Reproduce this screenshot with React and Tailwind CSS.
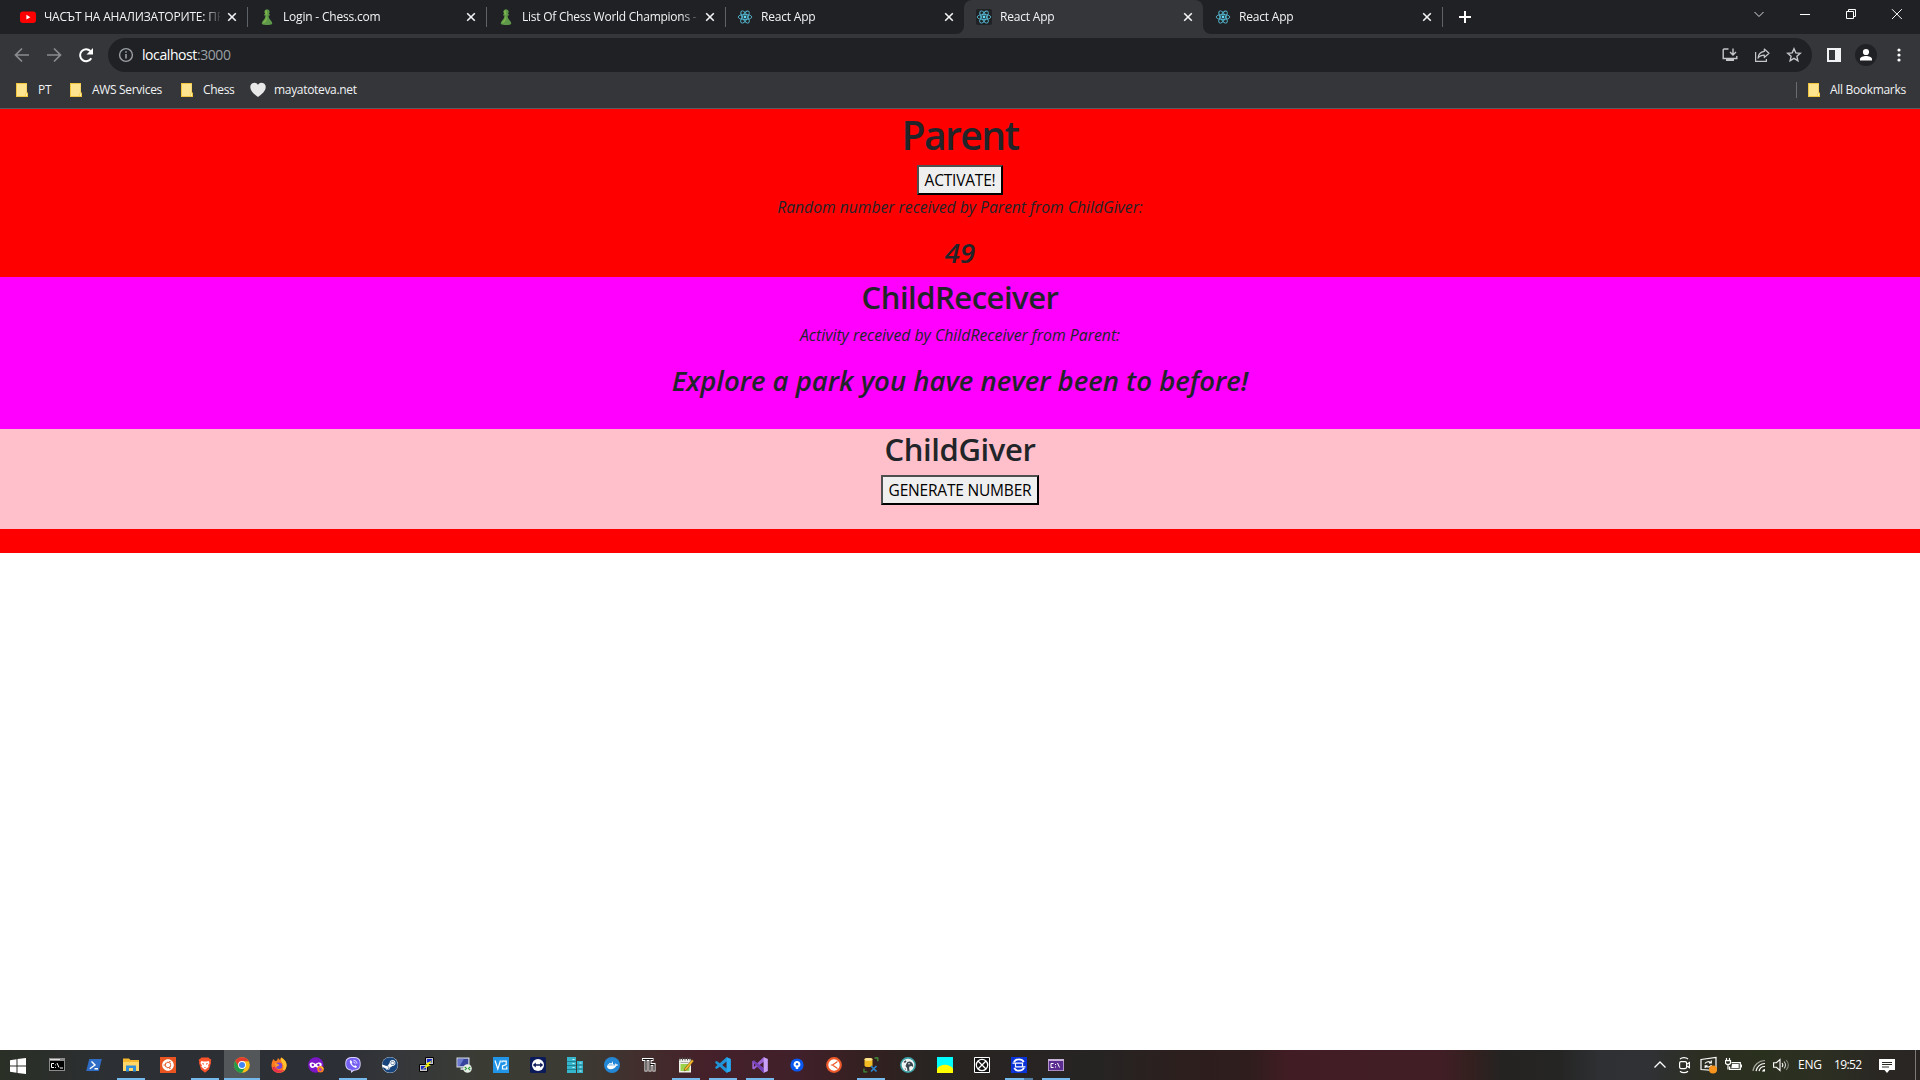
import React from "react";
import { FaUbuntu, FaSteam, FaDocker } from "react-icons/fa";

const UI = "font-['Open_Sans','Noto_Sans',sans-serif]";

/* ---------- browser icons ---------- */

function ReactLogo({ dark }) {
  return (
    <svg width="16" height="16" viewBox="0 0 16 16" fill="none">
      {dark && <rect width="16" height="16" rx="2" fill="#202124" />}
      <g stroke="#53b6cf" strokeWidth="0.9">
        <ellipse cx="8" cy="8" rx="6.8" ry="2.6" />
        <ellipse cx="8" cy="8" rx="6.8" ry="2.6" transform="rotate(60 8 8)" />
        <ellipse cx="8" cy="8" rx="6.8" ry="2.6" transform="rotate(120 8 8)" />
      </g>
      <circle cx="8" cy="8" r="1.4" fill="#61dafb" />
    </svg>
  );
}

function YouTube() {
  return (
    <svg width="16" height="16" viewBox="0 0 16 16">
      <rect y="2.5" width="16" height="11.5" rx="3" fill="#f00" />
      <path d="M6.4 5.8v4.8l4-2.4z" fill="#fff" />
    </svg>
  );
}

function Pawn() {
  return (
    <svg width="16" height="16" viewBox="0 0 16 16">
      <path
        d="M8 .3a2.6 2.6 0 0 1 1.9 4.4l1 .9v.9H9.6c.1 2.4.9 3.6 2.4 5.2.9 1 1.2 1.9 1.2 3.2-1.2.8-3 1.1-5.2 1.1s-4-.3-5.2-1.1c0-1.300.3-2.200 1.200-3.200C5.500 10.100 6.300 8.900 6.400 6.500H5.100v-.9l1-.9A2.600 2.600 0 0 1 8 .3z"
        fill="#5d9948"
      />
      <path d="M7.600 1a2 2 0 0 0-1 3.300l-.8 1.300h2c.1 3-1.300 5-3 6.900-.6.700-.9 1.300-1 2 1.500-.3 3-1.400 3.800-3.500.9-2.500.8-6.500 0-10z" fill="#81b64c" />
    </svg>
  );
}

function Close() {
  return (
    <svg width="16" height="16" viewBox="0 0 16 16" stroke="#f1f3f4" strokeWidth="1.600">
      <path d="M4.200 4.200l7.600 7.600M11.800 4.200l-7.600 7.600" />
    </svg>
  );
}

function Folder() {
  return (
    <svg width="12" height="14" viewBox="0 0 12 14">
      <path d="M0 0h11v9.500h1V14H0z" fill="#f0c63f" />
      <path d="M1 1h9.500v9H9.500v3H1z" fill="#ffe490" />
      <path d="M10 10.500h1v2.500h-1z" fill="#fff0b8" />
    </svg>
  );
}

/* ---------- tab strip ---------- */

const TABS = [
  { title: "ЧАСЪТ НА АНАЛИЗАТОРИТЕ: ПР", icon: <YouTube />, ls: "tracking-[-0.2px]" },
  { title: "Login - Chess.com", icon: <Pawn /> },
  { title: "List Of Chess World Champions - ", icon: <Pawn />, ls: "tracking-[-0.25px]" },
  { title: "React App", icon: <ReactLogo /> },
  { title: "React App", icon: <ReactLogo dark />, active: true },
  { title: "React App", icon: <ReactLogo /> },
];

function Foot({ side }) {
  return (
    <svg
      width="8"
      height="8"
      viewBox="0 0 8 8"
      className={side === "left" ? "absolute bottom-0 -left-[8px]" : "absolute bottom-0 -right-[8px] -scale-x-100"}
    >
      <path d="M8 0v8H0a8 8 0 0 0 8-8z" fill="#35363a" />
    </svg>
  );
}

function Tab({ tab, separator }) {
  return (
    <div className={"relative flex h-[34px] w-[239px] shrink-0 items-center pl-3 pr-[7px] " + (tab.active ? "rounded-t-lg bg-[#35363a]" : "")}>
      {tab.active && <Foot side="left" />}
      {tab.active && <Foot side="right" />}
      <span className="w-4 shrink-0">{tab.icon}</span>
      <span
        className={
          "ml-2 w-[176px] overflow-hidden whitespace-nowrap text-[12px] leading-[18px] text-[#f1f3f4] [mask-image:linear-gradient(to_right,#000_160px,transparent_178px)] " +
          (tab.ls || "tracking-[-0.2px]")
        }
      >
        {tab.title}
      </span>
      <span className="ml-auto shrink-0">
        <Close />
      </span>
      {separator && <span className="absolute -right-px top-[7px] h-5 w-px bg-[#5f6368]" />}
    </div>
  );
}

function TabStrip() {
  return (
    <div className="flex h-[34px] bg-[#202124] pl-2">
      {TABS.map((t, i) => (
        <Tab key={i} tab={t} separator={i !== 3 && i !== 4} />
      ))}
      <svg className="ml-[15px] mt-[9px]" width="16" height="16" viewBox="0 0 16 16" stroke="#fff" strokeWidth="2">
        <path d="M2 8h12M8 2v12" />
      </svg>
      <div className="ml-auto flex h-[28px] items-center">
        <svg width="46" height="28" viewBox="0 0 46 28" fill="none" stroke="#dadce0">
          <path d="M18.500 12l4.500 4.500 4.500-4.500" />
        </svg>
        <svg width="46" height="28" viewBox="0 0 46 28" stroke="#fff">
          <path d="M18 14.500h10" />
        </svg>
        <svg width="46" height="28" viewBox="0 0 46 28" fill="none" stroke="#fff">
          <path d="M18.500 11.500h7v7h-7zM20.500 11.500v-2h7v7h-2" />
        </svg>
        <svg width="46" height="28" viewBox="0 0 46 28" stroke="#fff">
          <path d="M18 9.200l9.800 9.800M27.800 9.200L18 19" />
        </svg>
      </div>
    </div>
  );
}

/* ---------- toolbar ---------- */

function Toolbar() {
  return (
    <div className="flex h-[42px] items-center bg-[#35363a] pl-3">
      <svg width="20" height="20" viewBox="0 0 20 20" fill="none" stroke="#8b8c8f" strokeWidth="1.700">
        <path d="M17 10H4M10 3.500L3.500 10l6.500 6.500" />
      </svg>
      <svg className="ml-3" width="20" height="20" viewBox="0 0 20 20" fill="none" stroke="#8b8c8f" strokeWidth="1.700">
        <path d="M3 10h13M10 3.500l6.500 6.500-6.500 6.500" />
      </svg>
      <svg className="ml-3" width="20" height="20" viewBox="0 0 20 20" fill="none" stroke="#fff" strokeWidth="2">
        <path d="M15.300 13.200A6 6 0 1 1 14.400 6" />
        <path d="M17 3v6.500h-6.500z" fill="#fff" stroke="none" />
      </svg>
      <div className="ml-3 flex h-[34px] w-[1704px] items-center rounded-full bg-[#202124] pl-2.5 pr-2.5">
        <svg width="16" height="16" viewBox="0 0 16 16" fill="none" stroke="#9aa0a6" strokeWidth="1.400">
          <circle cx="8" cy="8" r="6.400" />
          <path d="M8 7v4.500M8 4.300v1.500" strokeWidth="1.600" />
        </svg>
        <span className="ml-[8px] text-[14px] leading-5 tracking-[-0.42px] text-white">
          localhost<span className="text-[#9aa0a6]">:3000</span>
        </span>
        <div className="ml-auto flex items-center gap-4">
          <svg width="16" height="16" viewBox="0 0 16 16" fill="none" stroke="#c4c6c9" strokeWidth="1.400">
            <path d="M6.500 2H2.200a1 1 0 0 0-1 1v8.500h13.600V9M11 1.500v6M8 5l3 3 3-3" />
            <path d="M4 11.500h8V14H4z" fill="#c4c6c9" stroke="none" />
          </svg>
          <svg width="16" height="16" viewBox="0 0 16 16" fill="none" stroke="#c4c6c9" strokeWidth="1.200">
            <path d="M1.600 5v9.400h10.800V12" />
            <path d="M10.300 2l4.700 4.300-4.700 4.200V8.200C7.500 8.200 5.500 9 4 11.200c.3-3.700 2.400-6.300 6.300-6.800z" strokeLinejoin="round" />
          </svg>
          <svg width="16" height="16" viewBox="0 0 16 16" fill="none" stroke="#c4c6c9" strokeWidth="1.400">
            <path d="M8 1.800l1.800 4.100 4.500.4-3.400 3 1 4.400L8 11.400l-3.900 2.300 1-4.400-3.400-3 4.500-.4z" />
          </svg>
        </div>
      </div>
      <svg className="ml-[15px]" width="14" height="14" viewBox="0 0 14 14">
        <path d="M0 0h14v14H0zM2 2v10h6V2z" fill="#f1f3f4" fillRule="evenodd" />
      </svg>
      <svg className="ml-[14px]" width="22" height="22" viewBox="0 0 22 22">
        <circle cx="11" cy="11" r="11" fill="#202124" />
        <circle cx="11" cy="8" r="3.100" fill="#fff" />
        <path d="M5 16.500v-1.500c0-2 3.500-3 6-3s6 1 6 3v1.500z" fill="#fff" />
      </svg>
      <svg className="ml-[19.500px]" width="4" height="14" viewBox="0 0 4 14" fill="#fff">
        <circle cx="2" cy="2" r="1.600" />
        <circle cx="2" cy="7" r="1.600" />
        <circle cx="2" cy="12" r="1.600" />
      </svg>
    </div>
  );
}

function BookmarkBar() {
  const text = "text-[12px] leading-[18px] tracking-[-0.32px] text-[#f1f3f4] whitespace-nowrap";
  return (
    <div className="flex h-[33px] items-center border-b border-[#5a5c60] bg-[#35363a] pb-1 pl-4">
      <div className="flex w-[54px] items-center gap-2.5"><Folder /><span className={text}>PT</span></div>
      <div className="flex w-[111px] items-center gap-2.5"><Folder /><span className={text}>AWS Services</span></div>
      <div className="flex w-[69px] items-center gap-2.5"><Folder /><span className={text}>Chess</span></div>
      <svg width="16" height="16" viewBox="0 0 16 16">
        <path d="M8 15C4.500 12.500.300 9 .300 5.200A4.200 4.200 0 0 1 8 2.800a4.200 4.200 0 0 1 7.700 2.400C15.700 9 11.500 12.500 8 15z" fill="#e8e8e8" />
      </svg>
      <span className={text + " ml-2"}>mayatoteva.net</span>
      <span className="ml-auto h-4 w-px bg-[#6b6c70]" />
      <div className="ml-[11px] flex w-[112px] items-center gap-2.5"><Folder /><span className={text}>All Bookmarks</span></div>
    </div>
  );
}

/* ---------- page ---------- */

function Button({ children }) {
  return (
    <button className="block h-[30px] border-2 border-t-[#4f4f4f] border-l-[#4f4f4f] border-r-black border-b-black bg-[#efefef] px-1.5 text-[15.5px] leading-6 tracking-[-0.2px] text-black">
      {children}
    </button>
  );
}

function Page() {
  return (
    <main className="flex-1 bg-white text-center text-[#212529]">
      <section className="flex h-[444px] flex-col items-center bg-[#ff0000]">
        <h1 className="mb-2 h-12 text-[39px] font-semibold leading-[51px] tracking-[-1.5px]">Parent</h1>
        <Button>ACTIVATE!</Button>
        <p className="mb-4 h-6 text-[15.7px] italic leading-6">Random number received by Parent from ChildGiver:</p>
        <h3 className="mb-2 h-[34px] text-[27.5px] font-semibold italic leading-[35px]">49</h3>
        <div className="flex h-[152px] w-full shrink-0 flex-col items-center bg-[#ff00ff]">
          <h2 className="mb-2 h-[38px] text-[31px] font-semibold leading-[40px] tracking-[-0.5px]">ChildReceiver</h2>
          <p className="mb-4 h-6 text-[15.8px] italic leading-6">Activity received by ChildReceiver from Parent:</p>
          <h3 className="h-[34px] text-[27.5px] font-semibold italic leading-[35px]">Explore a park you have never been to before!</h3>
        </div>
        <div className="flex h-[100px] w-full shrink-0 flex-col items-center bg-[#ffc0cb]">
          <h2 className="mb-2 h-[38px] text-[31px] font-semibold leading-[40px] tracking-[-0.4px]">ChildGiver</h2>
          <Button>GENERATE NUMBER</Button>
        </div>
      </section>
    </main>
  );
}

/* ---------- taskbar ---------- */

function S({ children, ...rest }) {
  return (
    <svg width="16" height="16" viewBox="0 0 16 16" {...rest}>
      {children}
    </svg>
  );
}

const Terminal = () => (
  <S>
    <path d="M0 1h16v13H0z" fill="#8c8c8c" />
    <path d="M1 2h10v1H1z" fill="#ddd" />
    <path d="M1 4h14v9H1z" fill="#000" />
    <path d="M5 6.500H2.500v4H5M6.500 7.500v.8M6.500 10v.8M8 6l2 4.500M11 11h3" stroke="#fff" fill="none" />
  </S>
);
const PowerShell = () => (
  <S>
    <path d="M3.300 2h12.500l-3 12H.200z" fill="#2d6dc6" />
    <path d="M5.500 4.500L9 8l-5.200 3.800M8.500 11.800h3.500" stroke="#fff" strokeWidth="1.400" fill="none" />
  </S>
);
const Explorer = () => (
  <S>
    <path d="M0 1.500h6l1.500 1.500H16v11H0z" fill="#f5b82e" />
    <path d="M0 5h16v9H0z" fill="#ffd768" />
    <path d="M3 14.500V8.500h10v6h-3V11H6v3.500z" fill="#2f8fd8" />
  </S>
);
const Ubuntu = () => (
  <span className="flex size-4 items-center justify-center bg-[#e95420] text-white"><FaUbuntu size={12} /></span>
);
const Brave = () => (
  <S>
    <path d="M4.500.500h7L13 2l1.300.500-.5 2.500.200 1-2 6.500L8 15.700 4 12.500 2 6l.2-1-.5-2.500L3 2z" fill="#fb542b" />
    <path d="M4.300 4l2.200.500h3L11.700 4l.9 2-1.500 2.200.5 1.500L8 12.800 4.400 9.700l.5-1.500L3.400 6z" fill="#fff" />
    <path d="M4.800 6l2.200.500L6.500 8zM11.200 6L9 6.500 9.500 8zM7 10h2l-1 1.300z" fill="#fb542b" />
  </S>
);
const Chrome = () => (
  <S>
    <circle cx="8" cy="8" r="7.800" fill="#fbc116" />
    <path d="M1.200 4.100A7.800 7.800 0 0 1 14.800 4.200H8L4.700 9.900z" fill="#e33b2e" />
    <path d="M1.200 4.100A7.800 7.800 0 0 0 8 15.800l3.300-5.900H4.700z" fill="#229b48" />
    <circle cx="8" cy="8" r="3.900" fill="#fff" />
    <circle cx="8" cy="8" r="3" fill="#4285f4" />
  </S>
);
const Firefox = () => (
  <S>
    <path d="M2.500 2l1.500 2 2-.5L7 1l2 2 1-2.500C13.500 2.500 15.800 5 15.500 9A7.500 7 0 0 1 .500 9C.500 6 1.200 4 2.500 2z" fill="#ff7a1f" />
    <path d="M10 .500C14 2.500 16 5.500 15.500 9c-.5 3.500-3 5.500-5 6.200 2.500-3 2.500-6 1-8.700-1-1.700-2-3-1.500-6z" fill="#ffc42e" />
    <path d="M1 10.500c1.500 6.500 10 6.500 13 2-4 2-8.500 1-10.500-3z" fill="#e8304f" />
    <circle cx="8" cy="8.800" r="3.200" fill="#7a45d8" />
    <path d="M3.500 6.500c2-1 4 .500 5 1.500-1 1.500-3 1-3.500 2.500z" fill="#ff9a2e" />
  </S>
);
const PrivateFirefox = () => (
  <S>
    <circle cx="7.800" cy="8" r="7.700" fill="#7b16c9" />
    <path d="M1.500 7c1.700-2.300 4-1.500 6 0 2-1.500 4.500-2.300 6.300 0-.3 2.700-1.600 4-3.300 4s-2.200-1.300-3-1.300S5.700 11 4.500 11c-1.700 0-2.700-1.300-3-4z" fill="#fff" />
    <circle cx="4.800" cy="8" r="1.200" fill="#7b16c9" />
    <circle cx="10.400" cy="8" r="1.200" fill="#7b16c9" />
    <circle cx="12.500" cy="12.300" r="3.200" fill="#ff7a1f" />
    <path d="M12.500 9c2 .500 3.500 2 3 4-1-1.500-2-2-3-4z" fill="#ffd23e" />
    <circle cx="12.300" cy="12.600" r="1.300" fill="#9a3fd8" />
  </S>
);
const Viber = () => (
  <S>
    <path d="M8 0c5.200 0 7.700 1.500 7.700 6.800 0 5-2.200 6.900-6.700 6.900L6 16v-2.500C2 13 .300 11 .300 6.800.300 1.500 2.800 0 8 0z" fill="#d9d3ff" />
    <path d="M8 .900c4.700 0 6.800 1.200 6.800 5.900S12.500 12.800 8 12.800L6.700 14.200v-1.500C3 12.300 1.200 10.800 1.200 6.800 1.200 2.100 3.300.900 8 .900z" fill="#7360f2" />
    <path d="M4.900 3.500C4.200 6.500 7.500 10.300 11 11l1-1.500-1.700-1.200-1 .7C8 8.500 7 7.400 6.600 6.200l.8-.9L6 3.200z" fill="#fff" />
    <path d="M8.500 3.200c2 .100 3.300 1.400 3.400 3.400M8.500 5c1 0 1.600.700 1.600 1.600" stroke="#fff" strokeWidth=".8" fill="none" />
  </S>
);
const Steam = () => (
  <span className="flex size-4 items-center justify-center rounded-full bg-white text-[#17457c]"><FaSteam size={16} /></span>
);
const Putty = () => (
  <S>
    <path d="M6.500.500h8v7h-8z" fill="#c9c9c9" stroke="#000" />
    <path d="M8 2h5v3.500H8z" fill="#1b2cd0" />
    <path d="M.500 7.500h8v7h-8z" fill="#c9c9c9" stroke="#000" />
    <path d="M2 9h5v3.500H2z" fill="#1b2cd0" />
    <path d="M13.500 3L6 7.500h2.500L3 12.500l9-4.500H9.500z" fill="#ff0" />
  </S>
);
const RemoteDesktop = () => (
  <S>
    <path d="M.500.500h13v10H.500z" fill="#d4dbe3" />
    <path d="M1.700 1.700h10.600v7.500H1.700z" fill="#35459e" />
    <path d="M1.700 1.700H8L3.500 9.200H1.700z" fill="#6c7ad0" />
    <path d="M4.500 10.500h4V13h-4z" fill="#b9c0c8" />
    <circle cx="11.500" cy="11.500" r="4.300" fill="#e6efe6" />
    <path d="M8.800 10l1.700 1.500-1.700 1.500M14.200 10l-1.700 1.500 1.700 1.500" stroke="#2c9b3a" strokeWidth="1.100" fill="none" />
  </S>
);
const Vnc = () => (
  <S>
    <path d="M0 0h16v16H0z" fill="#2196e8" />
    <path d="M2 3.500L4.800 12 7.500 3.500M9 5.500V4.200h4.200V7.600L9.500 9v3h4.300V9.500" stroke="#fff" strokeWidth="1.200" fill="none" />
  </S>
);
const TeamViewer = () => (
  <S>
    <rect width="16" height="16" rx="1.500" fill="#0b1a58" />
    <circle cx="8" cy="8" r="6" fill="#fff" />
    <path d="M2.800 8l3-2.400v1.700h4.400V5.600l3 2.400-3 2.400V8.700H5.800v1.700z" fill="#0b1a58" />
  </S>
);
const Servers = () => (
  <S>
    <path d="M0 0h9v16H0zM10 4h6v12h-6z" fill="#35b6cc" />
    <path d="M0 4.500h9M0 8.500h9M0 12.500h9M10 8h6M10 12h6" stroke="#1c7484" strokeWidth=".8" />
    <path d="M5.500 2.500h2M5.500 6.500h2M5.500 10.500h2M12.500 6h2M12.500 10h2M12.500 14h2" stroke="#c9f5fb" />
  </S>
);
const Docker = () => (
  <span className="flex size-4 items-center justify-center rounded-full bg-[#2387d6] text-white"><FaDocker size={11} /></span>
);
const Typora = () => (
  <S fill="none">
    <path d="M1 2.500h11.500M5 2.500v12M9 2.500v12M9 7.500h4v7" stroke="#fff" strokeWidth="3" />
    <path d="M1.800 2.500h10M5 2.500v11.200M9 2.500v11.200M9 7.500h4v6.200" stroke="#111" strokeWidth="1.200" />
  </S>
);
const Notepad = () => (
  <S>
    <path d="M1 2h12v13.500H1z" fill="#f2f2ec" />
    <path d="M2.500 7h9v7h-9z" fill="#9bd14b" />
    <path d="M2 .500v3M4.500.500v3M7 .500v3M9.500.500v3M12 .500v3" stroke="#555" />
    <path d="M2.500 5.500h8" stroke="#aaa" />
    <path d="M14 2.500l1.800 1.500L8.500 13l-2.300 1 .5-2.500z" fill="#f3b52a" stroke="#5c3d10" strokeWidth=".5" />
  </S>
);
const VSCode = () => (
  <S>
    <path d="M11.500.300L15.700 2v12l-4.200 1.700L4.800 9.800 1.700 12 .300 11.200V10L2.500 8 .300 6V4.800L1.700 4l3.100 2.200zM11.700 4.500L7.200 8l4.500 3.500z" fill="#1f94d8" fillRule="evenodd" />
    <path d="M11.700.300L15.700 2v12l-4 1.700z" fill="#2aa9f3" />
  </S>
);
const VisualStudio = () => (
  <S>
    <path d="M11.500.300L15.700 2v12l-4.200 1.700L5.200 9.800 2 12.500.300 11.700V4.300L2 3.500l3.200 2.700zM11.700 4.800L7.500 8l4.200 3.200zM2 6v4l2-2z" fill="#9b62d6" fillRule="evenodd" />
    <path d="M11.700.300L15.700 2v12l-4 1.700z" fill="#c9a1f5" />
    <path d="M.300 4.300L2 3.500l9.700 7.700v4.500L5.200 9.800z" fill="#7440b8" />
  </S>
);
const Sourcetree = () => (
  <S>
    <circle cx="8" cy="8" r="6.600" fill="#0a58f0" />
    <path d="M8 4a3.300 3.300 0 0 1 1.200 6.400V12H6.800v-1.600A3.300 3.300 0 0 1 8 4z" fill="#fff" />
    <circle cx="8" cy="7.300" r="1.200" fill="#0a58f0" />
  </S>
);
const Postman = () => (
  <S>
    <circle cx="8" cy="8" r="7.900" fill="#f05a2a" />
    <circle cx="8" cy="8" r="5.700" fill="#fff" />
    <path d="M11.500 4.500L6.500 8l5 3.500M6.500 8H4.800" stroke="#f05a2a" strokeWidth="1.200" fill="none" />
  </S>
);
const Ssms = () => (
  <S>
    <path d="M1.500 2.500C1.500 .500 9.500.500 9.500 2.500v6c0 2-8 2-8 0z" fill="#f4bd24" />
    <ellipse cx="5.500" cy="2.400" rx="4" ry="1.400" fill="#ffe590" />
    <path d="M11.500 1h3.300v3.300M1 11.500v3.300h3.300" stroke="#3f8f3a" strokeWidth="1.300" fill="none" />
    <path d="M8 9l5.500 5.500M13.500 9L8 14.500" stroke="#2b83cc" strokeWidth="1.700" />
  </S>
);
const DBeaver = () => (
  <S>
    <circle cx="8" cy="8" r="7.900" fill="#3ba3a8" />
    <circle cx="8" cy="8" r="6.300" fill="#f2f4f4" />
    <path d="M7 5.500c2.500-2 5-.5 6 2l.3 2.500-2-1-1.800.500-.5 2 .8 2-2.300.8-.5-3.300-1.500-2z" fill="#3a4650" />
    <path d="M3.500 5l2-1.800 1 1.300-1.500 1.500zM4.500 11l1.500 1-.5 1z" fill="#3a4650" />
    <circle cx="9" cy="6.700" r=".8" fill="#f2f4f4" />
  </S>
);
const Sun = () => (
  <S>
    <path d="M0 0h16v16H0z" fill="#0ff" />
    <path d="M0 16v-4.500C2 9 5 7.800 8 7.800s6 1.200 8 3.700V16z" fill="#ff0" />
  </S>
);
const CrossCircle = () => (
  <S fill="none" stroke="#fff">
    <path d="M.500.500h15v15H.500z" fill="#111" />
    <circle cx="8" cy="8" r="5.700" strokeWidth="1.300" />
    <path d="M4 4l8 8M12 4l-8 8" strokeWidth="1.300" />
  </S>
);
const Sync = () => (
  <S fill="none" stroke="#fff">
    <path d="M0 0h16v16H0z" fill="#0b34d8" stroke="none" />
    <path d="M3 5.200C4.500 1.400 11 1.400 12.800 5M13 10.800C11.500 14.600 5 14.600 3.200 11" strokeWidth="1.700" />
    <path d="M4.500 6.200h7v3.600h-7zM1.500 6.200h3M11.500 9.800h3" strokeWidth="1.200" />
  </S>
);
const Prompt = () => (
  <S>
    <path d="M0 2h16v12H0z" fill="#c9b2da" />
    <path d="M.800 4h14.400v9.300H.800z" fill="#5c2d91" />
    <path d="M5.500 6.500H3v4h2.500M7.500 7v1M7.500 9.500v1M9.500 6l2 4.500" stroke="#fff" fill="none" />
  </S>
);

const APPS = [
  [Terminal], [PowerShell], [Explorer, 1], [Ubuntu], [Brave, 1], [Chrome, 2], [Firefox], [PrivateFirefox],
  [Viber, 1], [Steam], [Putty], [RemoteDesktop], [Vnc], [TeamViewer], [Servers], [Docker], [Typora],
  [Notepad, 1], [VSCode, 1], [VisualStudio, 1], [Sourcetree], [Postman], [Ssms, 1], [DBeaver], [Sun],
  [CrossCircle], [Sync, 3], [Prompt, 1],
];

function AppButton({ Icon, state }) {
  return (
    <div className="flex h-[30px] w-[37px] flex-col items-center">
      <div className={"flex h-[28px] w-9 items-center justify-center pt-0.5 " + (state === 2 ? "bg-[#54575a]" : "")}>
        <Icon />
      </div>
      {state === 1 && <div className="h-0.5 w-7 bg-[#76b9ed]" />}
      {state === 2 && <div className="h-0.5 w-9 bg-[#76b9ed]" />}
      {state === 3 && (
        <div className="flex h-0.5 w-7">
          <div className="w-[19px] bg-[#76b9ed]" />
          <div className="flex-1 bg-[#527fa6]" />
        </div>
      )}
    </div>
  );
}

function Taskbar() {
  return (
    <footer className="flex h-[30px] items-center bg-[linear-gradient(to_right,#2a3026_0px,#2b2e2c_60px,#2c3034_110px,#2c2f35_340px,#35373a_400px,#3a3c34_480px,#3c3a33_580px,#422c2c_650px,#45212a_700px,#40202a_800px,#33201f_870px,#282422_930px,#262423_1100px,#2c1f1e_1180px,#2f1d1d_1250px,#421c24_1290px,#411e26_1440px,#34201f_1470px,#252322_1500px,#252524_1560px,#2e3033_1600px,#2f3134_1650px,#2c2e22_1700px,#2a301e_1760px,#2c2f22_1820px,#2a2723_1880px,#292523_1920px)] text-white">
      <svg className="ml-2.5 mt-0.5" width="16" height="16" viewBox="0 0 16 16" fill="#fff">
        <path d="M0 2.200l6.500-.9v6.200H0zM7.500 1.100L16 0v7.500H7.500zM0 8.500h6.500v6.200L0 13.800zM7.500 8.500H16V16l-8.500-1.100z" />
      </svg>
      <div className="ml-[12.5px] flex">
        {APPS.map(([Icon, state], i) => (
          <AppButton key={i} Icon={Icon} state={state} />
        ))}
      </div>

      <svg className="ml-auto" width="12" height="16" viewBox="0 0 12 16" fill="none" stroke="#fff" strokeWidth="1.300">
        <path d="M.500 10.500L6 5l5.500 5.500" />
      </svg>
      <svg className="ml-[12px]" width="14" height="18" viewBox="0 0 14 18" fill="none" stroke="#fff" strokeWidth="1.200">
        <rect x="1.600" y="5.600" width="7" height="7" rx="1.500" />
        <path d="M8.600 8.300l2.800-1.700v5L8.600 10M2 3c2-1.800 6-1.800 8 0M2 15.200c2 1.800 6 1.800 8 0" />
      </svg>
      <svg className="ml-[8px]" width="18" height="18" viewBox="0 0 18 18" fill="none" stroke="#fff" strokeWidth="1.200">
        <path d="M1 3.500l15-2v13l-15-1z" />
        <path d="M5 7.500c1-2 4.500-2.500 6-.5M11.300 4.500V7H9M11.500 9c-.8 2-4 2.800-5.800 1M5.200 12V9.800h2.300" />
        <circle cx="13" cy="13.500" r="4" fill="#f7941d" stroke="none" />
      </svg>
      <svg className="ml-[7px]" width="17" height="16" viewBox="0 0 17 16" fill="none" stroke="#fff" strokeWidth="1.200">
        <path d="M6.500 5.600h8.800v6.800H4.600V9.500" />
        <path d="M7 7h6.700v4H6.300z" fill="#fff" stroke="none" />
        <path d="M16.500 7.500v3M1.500 1v2.500M4.500 1v2.500M.500 3.600h5v2.200a2.500 1.700 0 0 1-5 0zM3 8v4.500" />
      </svg>
      <svg className="ml-[10px]" width="14" height="16" viewBox="0 0 14 16" fill="none" strokeWidth="1.200">
        <path d="M1 14A12 12 0 0 1 13 3.500" stroke="#a5a69e" />
        <path d="M4 14.200A9 9 0 0 1 13 6.500M7 14.200a6 6 0 0 1 6-4.700" stroke="#fff" />
        <path d="M10 14.500a3 3 0 0 1 3-2.500v2.500z" fill="#fff" />
      </svg>
      <svg className="ml-[7px]" width="17" height="16" viewBox="0 0 17 16" fill="none" strokeWidth="1.100">
        <path d="M.600 5.700h2.800L7 2.500v11L3.400 10.300H.600zM9 6c1 1.200 1 2.800 0 4" stroke="#fff" />
        <path d="M11 4.500c1.800 2 1.800 5 0 7" stroke="#ccc" />
        <path d="M13.200 3c2.600 3 2.600 7 0 10" stroke="#83857a" />
      </svg>
      <span className="ml-[8px] w-[23px] text-[12px] leading-[18px] tracking-[-0.25px]">ENG</span>
      <span className="ml-[13px] w-[28px] whitespace-nowrap text-[12px] leading-[18px] tracking-[-0.6px]">19:52</span>
      <svg className="ml-[17px] mt-0.5" width="16" height="16" viewBox="0 0 16 16">
        <path d="M0 1h16v11h-5.500L8 15l-2.500-3H0z" fill="#fff" />
        <path d="M3 4.500h10M3 6.500h10M3 9h7" stroke="#2a2a22" />
      </svg>
      <span className="ml-5 mr-1 h-[30px] w-px bg-[#7b7a76]" />
    </footer>
  );
}

export default function App() {
  return (
    <div className={UI + " flex h-[1080px] w-[1920px] flex-col overflow-hidden bg-white"}>
      <header className="shrink-0">
        <TabStrip />
        <Toolbar />
        <BookmarkBar />
      </header>
      <Page />
      <Taskbar />
    </div>
  );
}
